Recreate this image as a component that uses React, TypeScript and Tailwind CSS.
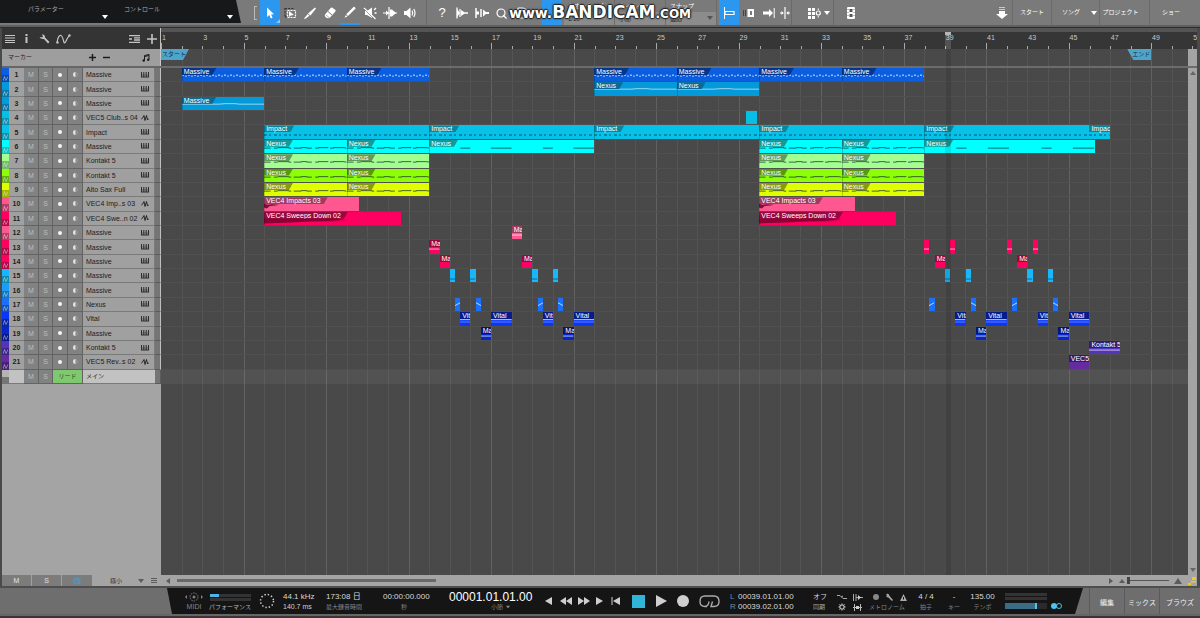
import React, { ReactNode } from "react";

/* ---------- timeline data ---------- */

const VISIBLE_BARS = 49.78;
const BARS = Array.from({ length: 50 }, (_, i) => i + 1);
const pct = (bars: number) => `${(bars / VISIBLE_BARS) * 100}%`;

type Pattern = "dots" | "line" | "flat" | "impact" | "steps" | "bass" | "wave" | "sweep" | "low" | "slash" | "back" | "vital" | "none";
type Clip = { start: number; len: number; label?: string; pattern: Pattern };
type Track = {
  name: string;
  audio?: boolean;
  color: string;
  dark: string;
  tag: string;
  clips: Clip[];
};

const at = (starts: number[], len: number, pattern: Pattern, label?: string): Clip[] =>
  starts.map((start) => ({ start, len, label, pattern }));

const TRACKS: Track[] = [
  { name: "Massive", color: "bg-[#0b5ee0]", dark: "bg-[#0a48a8]", tag: "bg-[#06368c]", clips: at([2, 6, 10, 22, 26, 30, 34], 4, "dots", "Massive") },
  { name: "Massive", color: "bg-[#0499d8]", dark: "bg-[#0b78a6]", tag: "bg-[#0b6a94]", clips: at([22, 26], 4, "line", "Nexus") },
  { name: "Massive", color: "bg-[#0499d8]", dark: "bg-[#0b78a6]", tag: "bg-[#0b6a94]", clips: at([2], 4, "line", "Massive") },
  { name: "VEC5 Club..s 04", audio: true, color: "bg-[#07bfe4]", dark: "bg-[#0d93ad]", tag: "bg-[#0d8399]", clips: at([29.37], 0.5, "none") },
  { name: "Impact", color: "bg-[#06c2e8]", dark: "bg-[#0d93ad]", tag: "bg-[#0c8599]", clips: [...at([6, 14, 22, 30, 38], 8, "impact", "Impact"), ...at([46], 1, "impact", "Impact")] },
  { name: "Massive", color: "bg-[#00ffff]", dark: "bg-[#12c0c0]", tag: "bg-[#149a9a]", clips: [...at([6, 10, 30, 34], 4, "steps", "Nexus"), ...at([14], 8, "bass", "Nexus"), ...at([38], 8.25, "bass", "Nexus")] },
  { name: "Kontakt 5", color: "bg-[#a2ff90]", dark: "bg-[#78b86c]", tag: "bg-[#649a5c]", clips: at([6, 10, 30, 34], 4, "steps", "Nexus") },
  { name: "Kontakt 5", color: "bg-[#8cff08]", dark: "bg-[#68b210]", tag: "bg-[#579a12]", clips: at([6, 10, 30, 34], 4, "steps", "Nexus") },
  { name: "Alto Sax Full", color: "bg-[#dfff00]", dark: "bg-[#a2b40c]", tag: "bg-[#8a9a0e]", clips: at([6, 10, 30, 34], 4, "steps", "Nexus") },
  { name: "VEC4 Imp..s 03", audio: true, color: "bg-[#ff5790]", dark: "bg-[#b44068]", tag: "bg-[#a03a5e]", clips: at([6, 30], 4.62, "wave", "VEC4 Impacts 03") },
  { name: "VEC4 Swe..n 02", audio: true, color: "bg-[#ff0060]", dark: "bg-[#b4084a]", tag: "bg-[#98083e]", clips: at([6, 30], 6.62, "sweep", "VEC4 Sweeps Down 02") },
  { name: "Massive", color: "bg-[#ff5790]", dark: "bg-[#b44068]", tag: "bg-[#a03a5e]", clips: at([18], 0.5, "flat", "Massive") },
  { name: "Massive", color: "bg-[#ff0060]", dark: "bg-[#b4084a]", tag: "bg-[#98083e]", clips: [...at([14], 0.5, "flat", "Massive"), ...at([38, 39.25, 42, 43.25], 0.25, "flat")] },
  { name: "Massive", color: "bg-[#ff0060]", dark: "bg-[#b4084a]", tag: "bg-[#98083e]", clips: at([14.5, 18.5, 38.5, 42.5], 0.5, "none", "Massive") },
  { name: "Massive", color: "bg-[#17b8fb]", dark: "bg-[#108cb0]", tag: "bg-[#0d7492]", clips: at([15, 16, 19, 20, 39, 40, 43, 44], 0.25, "low") },
  { name: "Massive", color: "bg-[#1a9ef8]", dark: "bg-[#1478b8]", tag: "bg-[#0f6296]", clips: [] },
  { name: "Nexus", color: "bg-[#1a70f8]", dark: "bg-[#1452b4]", tag: "bg-[#0f4290]", clips: [...at([15.25, 19.25, 38.25, 42.25], 0.25, "slash"), ...at([16.25, 20.25, 40.25, 44.25], 0.25, "back")] },
  { name: "Vital", color: "bg-[#0a36f4]", dark: "bg-[#0a26a8]", tag: "bg-[#061c8c]", clips: [...at([15.5, 19.5, 39.5, 43.5], 0.5, "vital", "Vital"), ...at([17, 21, 41, 45], 1, "vital", "Vital")] },
  { name: "Massive", color: "bg-[#0826c8]", dark: "bg-[#081a88]", tag: "bg-[#061670]", clips: at([16.5, 20.5, 40.5, 44.5], 0.5, "flat", "Massive") },
  { name: "Kontakt 5", color: "bg-[#5434bc]", dark: "bg-[#3c2488]", tag: "bg-[#341c74]", clips: at([46], 1.5, "flat", "Kontakt 5") },
  { name: "VEC5 Rev..s 02", audio: true, color: "bg-[#642ca0]", dark: "bg-[#482078]", tag: "bg-[#3c1864]", clips: at([45], 1, "none", "VEC5 Rev") },
];

/* ---------- clip contents ---------- */

function ClipPattern({ kind }: { kind: Pattern }) {
  if (kind === "none") return null;
  const line = (y: number, stroke: string, dash?: string, offset = 0) => (
    <line x1="0" x2="100" y1={y} y2={y} stroke={stroke} strokeWidth={1} strokeDasharray={dash} strokeDashoffset={offset} vectorEffect="non-scaling-stroke" />
  );
  return (
    <svg className="absolute inset-0 size-full" viewBox="0 0 100 14" preserveAspectRatio="none" aria-hidden="true">
      {kind === "dots" && (
        <>
          {line(7.5, "#d8e8ff", "2 4")}
          {line(8.5, "#a8c8f8", "2 4", 3)}
        </>
      )}
      {kind === "line" && <path d="M0 7.500H45L52 7H64L70 7.500H100" fill="none" stroke="#fff" strokeOpacity="0.6" vectorEffect="non-scaling-stroke" />}
      {kind === "flat" && line(9.5, "#ffffffb0")}
      {kind === "impact" && line(10.5, "#03506a", "3 2 2 3")}
      {kind === "steps" && (
        <path d="M0 8.500H8M12 8.500H16L17 8H30V8.500H33M36 8.500H45V8H52V8.500H58M62 8.500H66V8H78M80 8.500H84V8H96L100 8.500" fill="none" stroke="#123" strokeOpacity="0.7" vectorEffect="non-scaling-stroke" />
      )}
      {kind === "bass" && <path d="M19 8.500H25M37.500 8.500H50M69 8.500H75M87.500 8.500H100" fill="none" stroke="#045" strokeOpacity="0.8" vectorEffect="non-scaling-stroke" />}
      {kind === "wave" && <path d="M0 7L4 8L8 7.500L16 8L12 9L6 9.500L3 12L0 11Z" fill="#7a1238" />}
      {kind === "sweep" && <path d="M0 4L30 5L58 5L52 7L60 8L48 9L62 9.500L36 10L20 11L0 12Z" fill="#8a0034" />}
      {kind === "low" && line(10.5, "#0a6e9c")}
      {kind === "slash" && <path d="M0 8L100 5" stroke="#b8d8ff" vectorEffect="non-scaling-stroke" />}
      {kind === "back" && <path d="M0 5L100 8" stroke="#b8d8ff" vectorEffect="non-scaling-stroke" />}
      {kind === "vital" && (
        <>
          {line(8, "#b8c8ff")}
          {line(10.5, "#5f7cff")}
        </>
      )}
    </svg>
  );
}

function ClipBox({ clip, track }: { clip: Clip; track: Track }) {
  const short = clip.len <= 1.5;
  return (
    <div className={`absolute inset-y-0 overflow-hidden ${track.color}`} style={{ left: pct(clip.start - 1), width: pct(clip.len) }}>
      <ClipPattern kind={clip.pattern} />
      {clip.label && (
        <span
          className={`relative block h-[7px] whitespace-nowrap pl-0.5 text-[7px] leading-[7px] text-white ${track.tag} ${
            short ? "w-full" : "w-fit pr-[7px] [clip-path:polygon(0_0,100%_0,calc(100%-4px)_100%,0_100%)]"
          }`}
        >
          {clip.label}
        </span>
      )}
      {clip.len >= 4 && <span className="absolute inset-y-0 left-0 w-px bg-black/20" />}
    </div>
  );
}

/* ---------- icons ---------- */

function Icon({ children, w = 14, h = 14, className = "" }: { children: ReactNode; w?: number; h?: number; className?: string }) {
  return (
    <svg width={w} height={h} viewBox={`0 0 ${w} ${h}`} fill="currentColor" stroke="none" className={`shrink-0 ${className}`} aria-hidden="true">
      {children}
    </svg>
  );
}

const stroke = { fill: "none", stroke: "currentColor", strokeWidth: 1.2 } as const;

const I = {
  arrow: <Icon><path d="M4 1.500V11L6.300 9L7.800 12.500L9.600 11.700L8.100 8.400L11 8.200Z" /></Icon>,
  range: <Icon><path d="M2 2.500H11M2 2V11M2 11H5" {...stroke} strokeDasharray="2 1.200" stroke="#333" /><rect x="4.500" y="4.500" width="8" height="7" {...stroke} strokeDasharray="2 1" /><path d="M6 5V11L7.800 9.500L11 9Z" /></Icon>,
  knife: <Icon><path d="M12 1.500L13 2.500L7.500 9.500L5 7.500ZM4.800 8L6.500 9.800L2 13L1 12.500Z" /></Icon>,
  eraser: <Icon><path d="M9 1.500L12.500 4Q13 5 12 6L7 11.500Q5 13 3 11.500Q1 10 2 8.500L7.500 2.200Q8.200 1.200 9 1.500Z" /><path d="M5 5.500L9 9" stroke="#777" /><path d="M3 9L6 11.500" stroke="#999" strokeWidth="0.8" /></Icon>,
  pencil: <Icon><path d="M11 1.500L12.800 3.200L5 11L3.200 9.300ZM2.800 10L4.400 11.600L1.500 12.800Z" /></Icon>,
  mute: <Icon><path d="M2 5H4L9 1.500V12L4 9H2Z" /><path d="M1 2L12.500 13M11 4L13 2M11.500 7H13.500" stroke="currentColor" strokeWidth="1.300" /><path d="M1 3L11 13" stroke="#777" strokeWidth="0.700" /></Icon>,
  bend: <Icon><path d="M0 7H14M6 1V13" stroke="currentColor" strokeWidth="1.200" /><path d="M3 4.500L6 7L3 9.500ZM7 3.500H9L13 7L9 10.500H7Z" /></Icon>,
  listen: <Icon><path d="M1 5H3.500L7.500 1.500V12.500L3.500 9H1Z" /><path d="M9 4.500Q10.500 7 9 9.500M10.800 3Q13.200 7 10.800 11" {...stroke} /></Icon>,
  strip: <Icon><path d="M2 1.500V12.500M5 3V11" stroke="currentColor" strokeWidth="1.300" /><path d="M2 3L5 7L2 11ZM6 4L9.500 6.200H13V7.800H9.500L6 10Z" /></Icon>,
  fade: <Icon><path d="M1 2V12M6 3V11" stroke="currentColor" strokeWidth="1.500" /><path d="M1 5.500H4V8.500H1ZM8 3.500L11 6H14V8H11L8 10.500Z" /></Icon>,
  quant: <Icon><circle cx="6" cy="7" r="4" {...stroke} /><path d="M8 9L11.500 12.500" {...stroke} /></Icon>,
  macro: <Icon><path d="M3 2V12M3 2H8Q12 3 12 7Q12 11 8 12H3" {...stroke} /></Icon>,
  snapLeft: <Icon><path d="M2.500 1V13" stroke="currentColor" strokeWidth="1" /><path d="M3 5.500H12V8.500H3Z" {...stroke} /></Icon>,
  snapMid: <Icon><path d="M1.500 4V10M3.500 4V10" stroke="#444" strokeWidth="1" /><path d="M5.500 3H12V11H5.500ZM8 5V9H10V5Z" fillRule="evenodd" /></Icon>,
  snapArrow: <Icon><path d="M1 5.500H7V3L11 7L7 11V8.500H1Z" /><path d="M12.200 2V12" stroke="currentColor" strokeWidth="1" /></Icon>,
  snapSplit: <Icon><path d="M7 1V13" stroke="currentColor" strokeWidth="1.200" /><path d="M2 6.400H3.500V5L5.800 7L3.500 9V7.600H2ZM12 6.400H10.500V5L8.200 7L10.500 9V7.600H12Z" /></Icon>,
  grid: <Icon><path d="M1 2H4V5H1ZM5 2H8V5H5ZM1 6H4V9H1ZM5 6H8V9H5ZM1 10H4V13H1ZM5 10H8V13H5Z" /><circle cx="11.300" cy="7" r="2" {...stroke} /><path d="M11.300 2.500V4M11.300 10V11.500" stroke="currentColor" /></Icon>,
  film: <Icon><path d="M4 1H10Q11 1 11 2V12Q11 13 10 13H4Q3 13 3 12V2Q3 1 4 1Z" /><path d="M5.500 3H8.500V6H5.500ZM5.500 8H8.500V11H5.500Z" fill="#555" /><path d="M4 3V12M10 3V12" stroke="#777" strokeDasharray="1 2" /></Icon>,
  download: <Icon><path d="M4 1H10V2H4ZM4 3H10V4H4Z" opacity="0.6" /><path d="M4 5H10V8H13L7 13L1 8H4Z" /></Icon>,
};

const Down = ({ className = "" }: { className?: string }) => <Icon w={6} h={4} className={className}><path d="M0 0H6L3 4Z" /></Icon>;
const Up = ({ className = "" }: { className?: string }) => <Icon w={8} h={6} className={className}><path d="M0 6H8L4 0Z" /></Icon>;
const Keys = () => <Icon w={8} h={6} className="text-[#2c2c2c]"><path d="M0 5H8M0.500 0V5M2.800 0V5M5.200 0V5M7.500 0V5" fill="none" stroke="currentColor" strokeWidth="1" /><path d="M1 3H7" stroke="currentColor" strokeOpacity="0.5" /></Icon>;
const Wave = () => <Icon w={8} h={6}><path d="M0 4.500L1.500 3L3 0.500L4 5.500L5.500 0.500L6.500 5L8 3.500" fill="none" stroke="currentColor" strokeWidth="0.900" /></Icon>;
const Lines = () => <Icon w={10} h={8}><path d="M0 0.500H10M0 3H10M0 5.500H10M0 7.500H10" stroke="currentColor" strokeWidth="1" /></Icon>;

function Tool({ label, active, children, className = "" }: { label: string; active?: boolean; children: ReactNode; className?: string }) {
  return (
    <button type="button" aria-label={label} className={`flex h-full w-5 shrink-0 items-center justify-center text-white ${active ? "bg-[#2b97ee]" : ""} ${className}`}>
      {children}
    </button>
  );
}

const Rule = ({ className = "" }: { className?: string }) => <span className={`h-full w-px shrink-0 bg-[#6a6a6a] ${className}`} />;

function Combo({ label, value, arrow }: { label: string; value: string; arrow?: boolean }) {
  return (
    <label className="relative flex h-full w-[51px] shrink-0 flex-col border-r border-[#6c6c6c] text-[6px] leading-[6px] text-white">
      <span className="flex h-3 items-center whitespace-nowrap pl-1">{label}</span>
      <select className="h-[13px] w-full appearance-none bg-[#8c8c8c] pl-1 text-[6px] leading-[12px] text-[#222]">
        <option>{value}</option>
      </select>
      {arrow && <Down className="absolute right-[3px] bottom-[5px] text-[#555]" />}
    </label>
  );
}

/* ---------- top toolbar ---------- */

function Toolbar() {
  return (
    <header className="relative flex h-[25px] shrink-0 bg-[#7a7a7a]">
      <div className="flex h-[23px] w-[241px] shrink-0 bg-[#17181a] text-[6px] leading-[8px] text-[#aaa] [clip-path:polygon(0_0,236px_0,241px_100%,0_100%)]">
        <button type="button" className="flex w-[108px] items-start justify-between pt-[5px] pl-7 text-left">
          パラメーター<Down className="mt-[10px] text-white" />
        </button>
        <button type="button" className="flex w-[125px] items-start justify-between pt-[5px] pl-4 text-left">
          コントロール<Down className="mt-[10px] text-white" />
        </button>
      </div>
      <div className="flex w-[19px] shrink-0 items-center justify-end pr-[3px]">
        <span className="h-[14px] w-[3px] border-y border-l border-[#bbb]" />
      </div>
      <Tool label="矢印ツール" active className="relative">{I.arrow}<span className="absolute right-0 bottom-0.5 size-1 bg-[#8cc8f8] [clip-path:polygon(100%_0,100%_100%,0_100%)]" /></Tool>
      <Tool label="範囲ツール">{I.range}</Tool>
      <Tool label="分割ツール">{I.knife}</Tool>
      <Tool label="消しゴムツール">{I.eraser}</Tool>
      <Tool label="ペイントツール" className="border-b-2 border-[#2b97ee]">{I.pencil}</Tool>
      <Tool label="ミュートツール">{I.mute}</Tool>
      <Tool label="ベンドツール">{I.bend}</Tool>
      <Tool label="リッスンツール">{I.listen}</Tool>
      <Rule className="mr-[5px] ml-[6px]" />
      <Tool label="ヘルプ"><span className="text-[13px] leading-none">?</span></Tool>
      <Tool label="無音を除去">{I.strip}</Tool>
      <Tool label="フェード">{I.fade}</Tool>
      <Tool label="クオンタイズ">{I.quant}</Tool>
      <Tool label="マクロ">{I.macro}</Tool>
      <Tool label="スナップ切替" active className="mr-0.5 ml-[10px]"><span /></Tool>
      <div className="flex h-full shrink-0">
        <Combo label="クオンタイズ" value="1/16" />
        <Combo label="タイムベース" value="小節" />
        <Combo label="スナップ" value="適応" arrow />
      </div>
      <Tool label="左端にスナップ" active className="ml-0.5">{I.snapLeft}</Tool>
      <Tool label="終端にスナップ">{I.snapMid}</Tool>
      <Tool label="イベントにスナップ">{I.snapArrow}</Tool>
      <Tool label="中央にスナップ" className="-ml-1">{I.snapSplit}</Tool>
      <Rule className="mr-3 -ml-1" />
      <Tool label="グリッド設定">{I.grid}</Tool>
      <Down className="mt-[11px] text-white" />
      <Rule className="mr-[7px] ml-[3px]" />
      <Tool label="ビデオ">{I.film}</Tool>
      <span className="flex-1" />
      <Tool label="インストール">{I.download}</Tool>
      <nav className="flex shrink-0 text-[6px] text-white">
        <button type="button" className="w-[39px] border-l border-[#6a6a6a]">スタート</button>
        <button type="button" className="flex w-12 items-center justify-between border-l border-[#6a6a6a] pr-0.5 pl-2.5">ソング<Down /></button>
        <button type="button" className="w-[50px] border-l border-[#6a6a6a] pr-2">プロジェクト</button>
        <button type="button" className="w-[51px] border-l border-[#6a6a6a] pr-2">ショー</button>
      </nav>
      <div className="pointer-events-none absolute inset-x-0 top-[3px] flex items-baseline justify-center font-['DejaVu_Sans'] leading-[18px] font-bold text-white [text-shadow:1px_0_1px_#222,-1px_0_1px_#222,0_1px_1px_#222,0_-1px_1px_#222,0_0_3px_#333]">
        <span className="text-[14px]">www.</span>
        <span className="text-[17px]">BANDICAM</span>
        <span className="text-[12px]">.COM</span>
      </div>
    </header>
  );
}

/* ---------- track list ---------- */

const MiniButton = ({ label, children }: { label: string; children: ReactNode }) => (
  <button type="button" aria-label={label} className="flex h-full items-center justify-center border-r border-b border-[#636363] bg-[#828282] text-[7px] leading-none text-[#bdbdbd]">
    {children}
  </button>
);

const ROW = "grid grid-cols-[7px_15px_15px_14px_15px_15px_72px_6px] min-h-0";

function TrackHead({ track, n }: { track: Track; n: number }) {
  return (
    <li className={ROW}>
      <span className="flex flex-col">
        <span className={`flex-1 ${track.color}`} />
        <span className={`flex flex-1 items-center justify-center text-white/50 ${track.dark}`}><Icon w={5} h={5}><path d="M0 5L1.500 0.500L3 4.500L5 0.500" fill="none" stroke="currentColor" strokeWidth="0.800" /></Icon></span>
      </span>
      <span className="flex items-center justify-center border-b border-[#7a7a7a] bg-[#a0a0a0] text-[7px] leading-none font-bold text-[#222]">{n}</span>
      <MiniButton label={`${n} ミュート`}>M</MiniButton>
      <MiniButton label={`${n} ソロ`}>S</MiniButton>
      <MiniButton label={`${n} 録音`}><span className="size-1 rounded-full bg-[#f6f6f6]" /></MiniButton>
      <MiniButton label={`${n} モニター`}><Icon w={5} h={5}><path d="M2.500 0A2.500 2.500 0 0 0 2.500 5Z" fill="#e4e4e4" /><path d="M3.500 0.500Q5.500 2.500 3.500 4.500" stroke="#aaa" fill="none" strokeWidth="0.700" /></Icon></MiniButton>
      <span className="flex items-center justify-between border-r border-b border-[#7a7a7a] bg-[#a0a0a0] pr-[5px] pl-[3px] text-[7px] leading-none whitespace-nowrap text-[#1c1c1c]">
        {track.name}
        {track.audio ? <Wave /> : <Keys />}
      </span>
      <span className="border-r border-b border-[#5c5c5c] border-r-[#c0c0c0] bg-[#757575]" />
    </li>
  );
}

function TrackList() {
  return (
    <aside className="flex w-[159px] shrink-0 flex-col bg-[#a4a4a4]">
      <div className="flex h-[21px] shrink-0 items-center border-r border-[#c0c0c0] bg-[#343434] pl-[3px] text-[#c4c4c4]">
        <button type="button" aria-label="トラックリスト"><Lines /></button>
        <button type="button" aria-label="インスペクター" className="ml-[10px] w-1"><Icon w={3} h={9}><path d="M0.500 0H2.500V2H0.500ZM0.500 3H2.500V9H0.500Z" /></Icon></button>
        <button type="button" aria-label="設定" className="ml-[10px]"><Icon w={11} h={10}><path d="M3 0.500Q6 0 6 3.500L10.500 8L9 9.500L5 5Q1.500 5.500 0.500 3L3 3.500L4 2.500Z" /></Icon></button>
        <button type="button" aria-label="オートメーション" className="ml-[6px]"><Icon w={15} h={10}><path d="M1 9Q2 1 5 1.500Q6.500 2 8 8.500Q9 10 11 5L13.500 1" {...stroke} /><circle cx="1.500" cy="8.500" r="1.200" /><circle cx="13.500" cy="1.500" r="1.200" /></Icon></button>
        <button type="button" aria-label="表示" className="ml-auto"><Icon w={11} h={8}><path d="M0 0.500H11M0 7.500H11M0 4H3M5 2.800H11M5 5H11" stroke="currentColor" strokeWidth="1.300" /></Icon></button>
        <button type="button" aria-label="トラックを追加" className="mr-[3px] ml-[7px]"><Icon w={10} h={10}><path d="M5 0V10M0 5H10" stroke="currentColor" strokeWidth="1.600" /></Icon></button>
      </div>
      <div className="flex h-[17px] shrink-0 items-center border-r border-[#c8c8c8] bg-[#9e9e9e] pl-[6px] text-[6px] text-[#1c1c1c]">
        マーカー
        <button type="button" aria-label="マーカーを追加" className="ml-auto"><Icon w={7} h={7}><path d="M3.500 0V7M0 3.500H7" stroke="currentColor" strokeWidth="1.500" /></Icon></button>
        <button type="button" aria-label="マーカーを削除" className="ml-[7px]"><Icon w={7} h={7}><path d="M0 3.500H7" stroke="currentColor" strokeWidth="1.500" /></Icon></button>
        <button type="button" aria-label="タイムベース" className="mr-[10px] ml-8"><Icon w={8} h={8}><path d="M2.500 6.500V1.500L7 0.500V5.500M2.500 2.500L7 1.500" {...stroke} strokeWidth={1} /><circle cx="1.700" cy="6.500" r="1.200" /><circle cx="6.200" cy="5.800" r="1.200" /></Icon></button>
      </div>
      <div className="h-0.5 shrink-0 bg-[#666]" />
      <ul className="grid h-[316px] shrink-0 grid-rows-[repeat(22,minmax(0,1fr))]">
        {TRACKS.map((t, i) => <TrackHead key={i} track={t} n={i + 1} />)}
        <li className={ROW}>
          <span className="flex flex-col"><span className="flex-1 bg-[#b4b4b4]" /><span className="flex-1 bg-[#757575]" /></span>
          <span className="border-b border-[#7a7a7a] bg-[#c2c2c2]" />
          <MiniButton label="メイン ミュート">M</MiniButton>
          <MiniButton label="メイン ソロ">S</MiniButton>
          <button type="button" className="col-span-2 border-r border-b border-[#636363] bg-[#7fc870] text-[6px] leading-none text-[#24501c]">リード</button>
          <span className="flex items-center border-b border-[#7a7a7a] bg-[#c2c2c2] pl-[3px] text-[6px] leading-none text-[#1c1c1c]">メイン</span>
          <span className="border-r border-b border-[#5c5c5c] bg-[#757575]" />
        </li>
      </ul>
    </aside>
  );
}

/* ---------- arrangement ---------- */

function BarLines() {
  return (
    <div className="absolute inset-0 flex overflow-hidden" aria-hidden="true">
      {BARS.map((b) => (
        <span key={b} className={`h-full shrink-0 border-l ${b === 1 ? "border-transparent" : b % 4 === 1 ? "border-[#616161]" : "border-[#545454]"}`} style={{ width: pct(1) }} />
      ))}
    </div>
  );
}

function Arrangement() {
  return (
    <main className="flex min-w-0 flex-1 flex-col bg-[#494949]">
      <div className="h-[21px] shrink-0 overflow-hidden border-t-4 border-[#545454] bg-[#363636] pr-[9px]">
        <div className="relative flex h-full">
          {Array.from({ length: 26 }, (_, i) => i * 2 + 1).map((b) => (
            <div key={b} className="flex shrink-0 items-end text-[7px] leading-none text-[#c8c8c8]" style={{ width: pct(2) }}>
              <span className={`w-px shrink-0 bg-[#aaa] ${b % 4 === 1 ? "h-[6px]" : "h-[3px]"}`} />
              <span className="mb-2 flex-1">{b}</span>
              <span className="relative flex-1"><span className="absolute bottom-0 left-0 h-[3px] w-px bg-[#aaa]" /></span>
            </div>
          ))}
          <span className="absolute -top-[3px] h-[6px] w-[6px] bg-[#aaa]" style={{ left: pct(38) }} />
          <span className="absolute inset-y-0 w-[6px] bg-white/15" style={{ left: pct(38) }} />
        </div>
      </div>
      <div className="flex min-h-0 flex-1">
        <div className="relative flex min-w-0 flex-1 flex-col">
          <BarLines />
          <div className="relative h-[17px] shrink-0">
            <span className="absolute top-0 left-0 h-[11px] w-7 bg-[#4fa4cc] pl-px text-[6px] leading-[11px] whitespace-nowrap text-[#12303e] [clip-path:polygon(0_0,100%_0,calc(100%-6px)_100%,0_100%)]">スタート</span>
            <span className="absolute top-0 h-[11px] w-6 -translate-x-full bg-[#4fa4cc] pl-[5px] text-[6px] leading-[11px] whitespace-nowrap text-[#12303e] [clip-path:polygon(0_0,100%_0,100%_100%,6px_100%)]" style={{ left: pct(48) }}>エンド</span>
          </div>
          <div className="relative h-0.5 shrink-0 bg-[#6c6c6c]" />
          <div className="relative grid h-[316px] shrink-0 grid-rows-[repeat(22,minmax(0,1fr))]">
            {TRACKS.map((t, i) => (
              <div key={i} className="relative border-b border-[#505050]">
                {t.clips.map((c, k) => <ClipBox key={k} clip={c} track={t} />)}
              </div>
            ))}
            <div className="bg-white/5" />
          </div>
          <span className="pointer-events-none absolute inset-y-0 w-[6px] bg-black/10" style={{ left: pct(38) }} />
        </div>
        <div className="flex w-[9px] shrink-0 flex-col bg-[#a4a4a4] text-[#666]">
          <span className="h-[17px] shrink-0" />
          <span className="h-0.5 shrink-0 bg-[#6c6c6c]" />
          <button type="button" aria-label="上へスクロール" className="mt-[3px] flex justify-center"><Icon w={6} h={4}><path d="M0 4H6L3 0Z" /></Icon></button>
          <span className="flex-1" />
          <button type="button" aria-label="下へスクロール" className="mb-[3px] flex justify-center"><Down /></button>
        </div>
      </div>
    </main>
  );
}

function ScrollRow() {
  return (
    <div className="flex h-[11px] shrink-0 items-center bg-[#a4a4a4] text-[#5c5c5c]">
      <div className="grid h-full w-[90px] shrink-0 grid-cols-3 text-[7px] leading-none text-[#e4e4e4]">
        <button type="button" className="border-r border-[#a0a0a0] bg-[#7c7c7c]">M</button>
        <button type="button" className="border-r border-[#a0a0a0] bg-[#7c7c7c]">S</button>
        <button type="button" aria-label="オートメーション" className="flex items-center justify-center bg-[#7c7c7c] text-[#3f9fe0]"><Icon w={8} h={8}><circle cx="4" cy="4" r="3" {...stroke} /><path d="M4 2V4.500H5.500" {...stroke} strokeWidth={1} /></Icon></button>
      </div>
      <label className="ml-4 flex w-[36px] items-center">
        <select aria-label="トラックの高さ" className="w-[30px] appearance-none bg-transparent pl-0.5 text-[6px] leading-[10px] text-[#333]"><option>極小</option></select>
        <Down />
      </label>
      <button type="button" aria-label="リスト" className="ml-[7px]"><Icon w={6} h={6}><path d="M0 0.500H6M0 2.500H6M0 4.500H6" stroke="currentColor" /></Icon></button>
      <button type="button" aria-label="左へスクロール" className="ml-[9px]"><Icon w={4} h={6}><path d="M4 0V6L0 3Z" /></Icon></button>
      <div className="mr-[6px] ml-[7px] flex-1"><div className="h-[3px] w-[28%] bg-[#686868]" /></div>
      <button type="button" aria-label="右へスクロール"><Icon w={4} h={6}><path d="M0 0V6L4 3Z" /></Icon></button>
      <Icon w={6} h={4} className="ml-[6px]"><path d="M0 4H6L3 0Z" /></Icon>
      <input type="range" aria-label="ズーム" defaultValue={0} className="mx-0.5 h-[9px] w-[42px] appearance-none bg-transparent [&::-webkit-slider-runnable-track]:h-px [&::-webkit-slider-runnable-track]:bg-[#555] [&::-webkit-slider-thumb]:-mt-[3px] [&::-webkit-slider-thumb]:h-[7px] [&::-webkit-slider-thumb]:w-[3px] [&::-webkit-slider-thumb]:appearance-none [&::-webkit-slider-thumb]:bg-[#444]" />
      <Up className="ml-[3px]" />
      <Icon w={8} h={8} className="mr-px ml-[6px] text-[#f4c81c]"><path d="M4 0H8V3H4ZM3 4H8V5.500H3ZM0 6H3V8H0Z" /></Icon>
    </div>
  );
}

/* ---------- transport ---------- */

function Readout({ top, bottom, className = "" }: { top: ReactNode; bottom: ReactNode; className?: string }) {
  return (
    <div className={`flex shrink-0 flex-col justify-center pt-0.5 text-[8px] leading-[10px] whitespace-nowrap text-[#d8d8d8] ${className}`}>
      <span className="flex h-[10px] items-center">{top}</span>
      <span className="flex h-[10px] items-center text-[6px] text-[#858585]">{bottom}</span>
    </div>
  );
}

const TButton = ({ label, w, className = "", children }: { label: string; w: string; className?: string; children: ReactNode }) => (
  <button type="button" aria-label={label} className={`flex h-full shrink-0 items-center justify-center ${w} ${className}`}>{children}</button>
);

function Transport() {
  return (
    <footer className="flex h-[26px] shrink-0 bg-[#6e6e6e]">
      <div className="w-[167px] shrink-0" />
      <div className="flex min-w-0 flex-1 bg-[#151515] text-[#cfcfcf] [clip-path:polygon(0_0,100%_0,calc(100%-8px)_100%,5px_100%)]">
        <Readout
          className="ml-[15px] w-6 items-center"
          top={<Icon w={18} h={10} className="text-[#808080]"><circle cx="9" cy="5" r="4" fill="none" stroke="currentColor" strokeDasharray="1.500 1" /><circle cx="9" cy="5" r="1.500" /><path d="M2 3V7L0 5ZM16 3V7L18 5Z" /></Icon>}
          bottom={<span className="text-[7px]">MIDI</span>}
        />
        <Readout
          className="ml-[3px] w-[42px] items-center"
          top={<span className="flex w-[41px] flex-col gap-px"><span className="h-[3px] bg-[#333]"><span className="block h-full w-[9px] bg-[#4eb4e8]" /></span><span className="h-[3px] bg-[#333]" /></span>}
          bottom={<span className="text-[#bbb]">パフォーマンス</span>}
        />
        <div className="flex w-[32px] shrink-0 items-center justify-center"><Icon w={16} h={16}><circle cx="8" cy="8" r="6.500" fill="none" stroke="currentColor" strokeWidth="1.500" strokeDasharray="1.400 2" /></Icon></div>
        <Readout className="w-[43px]" top="44.1 kHz" bottom={<span className="text-[7px] text-[#d0d0d0]">140.7 ms</span>} />
        <Readout className="w-[57px]" top="173:08 日" bottom="最大録音時間" />
        <Readout className="w-[66px]" top="00:00:00.000" bottom={<span className="pl-[18px]">秒</span>} />
        <Readout className="w-[91px]" top={<span className="text-[12px] text-white">00001.01.01.00</span>} bottom={<span className="flex items-center gap-0.5 pl-[42px]">小節<Down className="scale-75" /></span>} />
        <TButton label="前のマーカー" w="w-[17px]"><Icon w={7} h={8}><path d="M7 0V8L0 4Z" /></Icon></TButton>
        <TButton label="巻き戻し" w="w-[17px]"><Icon w={12} h={8}><path d="M6 0V8L0 4ZM12 0V8L6 4Z" /></Icon></TButton>
        <TButton label="早送り" w="w-[19px]"><Icon w={12} h={8}><path d="M0 0V8L6 4ZM6 0V8L12 4Z" /></Icon></TButton>
        <TButton label="次のマーカー" w="w-[13px]"><Icon w={7} h={8}><path d="M0 0V8L7 4Z" /></Icon></TButton>
        <TButton label="先頭に戻る" w="w-[18px]"><Icon w={9} h={8}><path d="M0.500 0H1.500V8H0.500ZM9 0V8L2 4Z" /></Icon></TButton>
        <TButton label="停止" w="w-[29px]"><span className="size-[13px] bg-[#30b4d8]" /></TButton>
        <TButton label="再生" w="w-[17px]"><Icon w={11} h={12}><path d="M0 0V12L11 6Z" /></Icon></TButton>
        <TButton label="録音" w="w-[26px]"><span className="size-3 rounded-full bg-[#cfcfcf]" /></TButton>
        <TButton label="ループ" w="w-[26px]"><Icon w={21} h={13}><path d="M8 11.500H6Q1 11.500 1 6.500Q1 1 6 1H15Q20 1 20 6.500Q20 11.500 15 11.500H12L13.500 6.500M5.500 11.500Q9.500 11.500 10 6.500" fill="none" stroke="#aaa" strokeWidth="1.400" /></Icon></TButton>
        <Readout className="ml-2 w-[83px]" top={<><span className="w-2 text-[#6c8fa8]">L</span>00039.01.01.00</>} bottom={<span className="flex text-[8px] text-[#d8d8d8]"><span className="w-2 text-[#6c8fa8]">R</span>00039.02.01.00</span>} />
        <Readout className="w-[24px]" top={<span className="text-[7px]">オフ</span>} bottom={<span className="text-[#aaa]">同期</span>} />
        <Readout
          className="w-4"
          top={<Icon w={10} h={6}><path d="M0 1.500H3L6 4.500H10M6 2L4 3" fill="none" stroke="#aaa" /></Icon>}
          bottom={<Icon w={8} h={8} className="ml-px text-[#bbb]"><circle cx="4" cy="4" r="2.200" {...stroke} /><path d="M4 0V8M0 4H8M1 1L7 7M7 1L1 7" stroke="currentColor" strokeWidth="0.600" /><circle cx="4" cy="4" r="1.200" fill="#151515" /></Icon>}
        />
        <Readout
          className="w-5"
          top={<Icon w={10} h={7}><path d="M0.500 0V7M3 0V7M3 3.500H10" stroke="#aaa" /><path d="M5 1L8 3.500L5 6Z" fill="#ccc" /></Icon>}
          bottom={<Icon w={9} h={7}><path d="M1.500 0V7M7.500 0V7M0 3.500H9" stroke="#bbb" /><path d="M3 2H6V5H3Z" fill="#ccc" /></Icon>}
        />
        <Readout
          className="w-[44px]"
          top={
            <span className="flex items-center gap-[7px] text-[#aaa]">
              <span className="size-[6px] rounded-full bg-[#888]" />
              <Icon w={7} h={8}><path d="M0 1Q3 0 3.500 3L7 7L6 8L2.500 4.500Q0 4.500 0 2.500L1.500 3Z" /></Icon>
              <Icon w={7} h={7}><path d="M3.500 0L7 7H0ZM3 3V5.500H4V3Z" fillRule="evenodd" /></Icon>
            </span>
          }
          bottom={<span className="-ml-1">メトロノーム</span>}
        />
        <Readout className="w-[30px] items-center pr-3" top="4 / 4" bottom="拍子" />
        <Readout className="w-[14px] items-center" top="-" bottom="キー" />
        <Readout className="ml-[7px] w-[37px] items-center pr-2" top="135.00" bottom="テンポ" />
        <div className="flex w-[42px] shrink-0 flex-col justify-center gap-[3px]">
          <div className="flex h-[7px] flex-col gap-px"><span className="h-[3px] bg-[#333]" /><span className="h-[3px] bg-[#333]" /></div>
          <div className="h-[6px] bg-[#2a2a2a]"><span className="block h-full w-[32px] border-r-2 border-[#58c0f0] bg-[#3a6c88]" /></div>
        </div>
        <div className="flex items-end pb-[5px] pl-1"><Icon w={11} h={6}><circle cx="3" cy="3" r="3" fill="#4cc4f0" /><circle cx="8" cy="3" r="2.500" fill="none" stroke="#4cc4f0" /></Icon></div>
      </div>
      <nav className="ml-[6px] grid w-[111px] shrink-0 grid-cols-[35px_35px_41px] text-[7px] text-[#f0f0f0]">
        <button type="button" className="border-l border-[#5a5a5a] pt-1">編集</button>
        <button type="button" className="border-l border-[#5a5a5a] pt-1">ミックス</button>
        <button type="button" className="border-l border-[#5a5a5a] pt-1">ブラウズ</button>
      </nav>
    </footer>
  );
}

export default function App() {
  return (
    <div className="flex h-screen flex-col bg-[#4a4a4a] font-['Liberation_Sans','Noto_Sans_CJK_JP',sans-serif] select-none">
      <Toolbar />
      <div className="h-[3px] shrink-0 border-b border-[#2c2c2c] bg-[#606060]" />
      <div className="flex min-h-0 flex-1 flex-col border-r-[3px] border-l-2 border-[#4a4a4a]">
        <div className="flex min-h-0 flex-1">
          <TrackList />
          <Arrangement />
        </div>
        <ScrollRow />
      </div>
      <div className="h-0.5 shrink-0 bg-[#4e4e4e]" />
      <Transport />
      <div className="h-1 shrink-0 border-b-2 border-[#3c3434] bg-[#666]" />
    </div>
  );
}
